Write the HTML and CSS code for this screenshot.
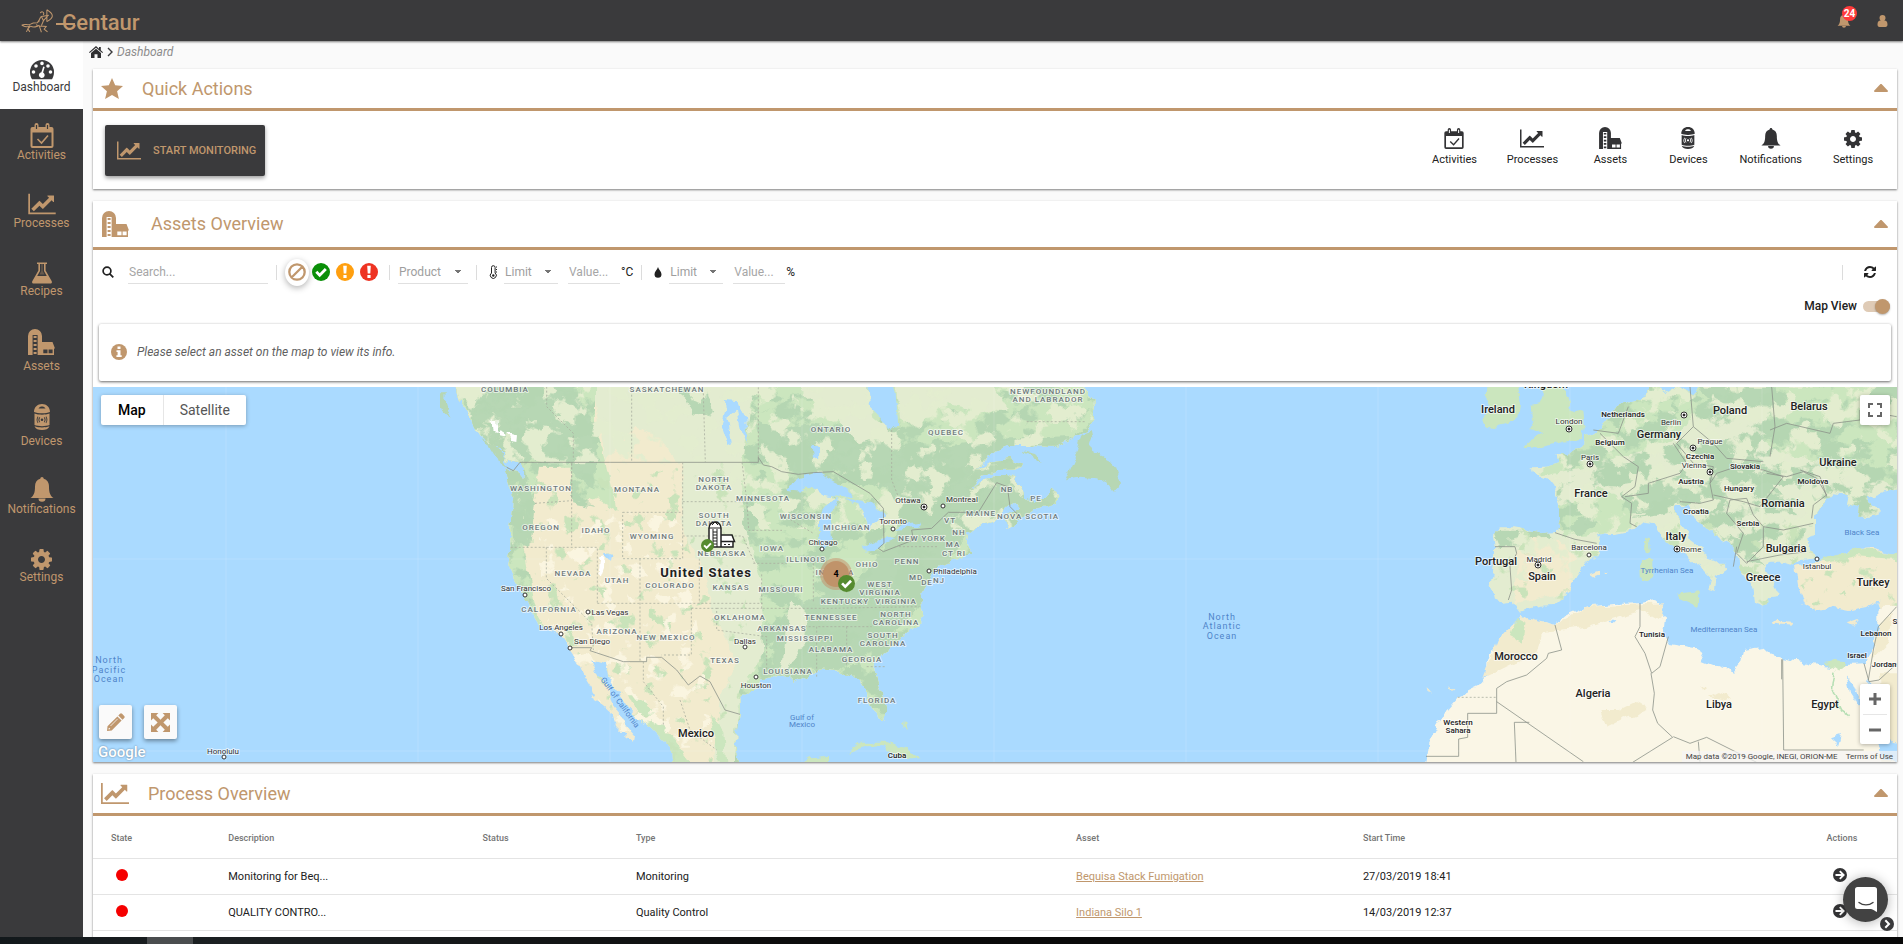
FILE: index.html
```
<!DOCTYPE html>
<html lang="en">
<head>
    <meta charset="UTF-8">
    <meta name="viewport" content="width=device-width, initial-scale=1.0">
    <title>Centaur - Dashboard</title>
    <link rel="stylesheet" href="styles.css">
</head>
<body>
    <!-- Icon set -->
    <svg class="sprite" aria-hidden="true">
        <symbol id="i-dashboard" viewBox="0 0 24 20">
            <path fill="currentColor" fill-rule="evenodd" d="M12 0a12 12 0 0 1 12 12c0 3-.8 5.500-2 7.300H2C.8 17.500 0 15 0 12A12 12 0 0 1 12 0zM3.500 10.200a1.800 1.800 0 1 0 0 3.600 1.800 1.800 0 0 0 0-3.600zM6 4.200a1.800 1.800 0 1 0 0 3.600 1.800 1.800 0 0 0 0-3.600zM12 1.600a1.800 1.800 0 1 0 0 3.600 1.800 1.800 0 0 0 0-3.600zM18 4.200a1.800 1.800 0 1 0 0 3.600 1.800 1.800 0 0 0 0-3.600zM20.500 10.200a1.800 1.800 0 1 0 0 3.600 1.800 1.800 0 0 0 0-3.600zM13.200 6.500l-1.800 5.700a2.900 2.900 0 1 0 1.700.3l1.600-5.600z"/>
        </symbol>
        <symbol id="i-calendar" viewBox="0 0 23 25">
            <path fill="currentColor" fill-rule="evenodd" d="M2 4h2V2a2 2 0 0 1 4 0v2h7V2a2 2 0 0 1 4 0v2h2a2 2 0 0 1 2 2v17a2 2 0 0 1-2 2H2a2 2 0 0 1-2-2V6a2 2 0 0 1 2-2zM2 9.500V23h19V9.500zM5.400 2v4h1.200V2zM16.400 2v4h1.200V2z"/>
            <path fill="none" stroke="currentColor" stroke-width="1.600" d="M7 16l4 4 6.500-7.500"/>
        </symbol>
        <symbol id="i-chart" viewBox="0 0 2048 1792">
            <path fill="currentColor" d="M2048 1536v128h-2048v-1536h128v1408h1920zm-128-1248v435q0 21-19.500 29.500t-35.500-7.500l-121-121-633 633q-10 10-23 10t-23-10l-233-233-416 416-192-192 585-585q10-10 23-10t23 10l233 233 464-464-121-121q-16-16-7.500-35.500t29.500-19.500h435q14 0 23 9t9 23z"/>
        </symbol>
        <symbol id="i-flask" viewBox="0 0 20 21">
            <path fill="currentColor" fill-rule="evenodd" d="M5 0h10v1.600h-1.400V8l6 10.600c.8 1.400 0 2.400-1.300 2.400H1.700C.4 21-.4 20 .4 18.600L6.400 8V1.600H5zM8 1.600v6.800L5.200 13.500h9.600L12 8.400V1.600z"/>
            <path fill="currentColor" d="M9.300 1.600h1.400v7L12.500 12h-5l1.800-3.400z" opacity=".35"/>
        </symbol>
        <symbol id="i-silo" viewBox="0 0 27 26">
            <path fill="currentColor" fill-rule="evenodd" d="M0 26V7a7 7 0 0 1 14 0v6h10.500l2.500 6.500h-1V26zM4.600 6v20h5V6zM15.300 20.600v3.600h4.200v-3.600zM20.600 20.600v3.600h4v-3.600z"/>
            <path fill="currentColor" d="M5.600 7h3v2h-3zM5.600 11h3v2h-3zM5.600 15h3v2h-3zM5.600 19h3v2h-3zM5.600 23h3v2h-3z"/>
        </symbol>
        <symbol id="i-device" viewBox="0 0 16 26">
            <path fill="currentColor" fill-rule="evenodd" d="M0 8C0 3 3.500 0 8 0s8 3 8 8c-4 1.800-12 1.800-16 0zM4.500 4.600h7C10.500 3 9.500 2.600 8 2.600s-2.500.4-3.500 2z"/>
            <path fill="currentColor" fill-rule="evenodd" d="M.5 9.500c4 1.600 11 1.600 15 0V21c-4 1.500-11 1.500-15 0zM8 14.500a1.300 1.300 0 1 0 0 2.600 1.300 1.300 0 0 0 0-2.600zM5.600 13c-1.600 1.500-1.600 4 0 5.600l.6-.7c-1.100-1.200-1.100-3 0-4.200zM10.400 13l-.6.700c1.100 1.200 1.100 3 0 4.200l.6.700c1.600-1.600 1.600-4.100 0-5.600zM3.800 12.300c-1.600 2-1.600 5 0 7l.6-.6c-1.200-1.700-1.200-4.100 0-5.800zM12.200 12.300l-.6.600c1.200 1.700 1.200 4.100 0 5.800l.6.600c1.600-2 1.600-5 0-7z"/>
            <path fill="currentColor" d="M.5 22.200c4 1.600 11 1.600 15 0C14.500 25 11.500 26 8 26S1.500 25 .5 22.200z"/>
        </symbol>
        <symbol id="i-bell" viewBox="0 0 24 25">
            <path fill="currentColor" d="M12 0c1 0 1.600.7 1.700 1.800C17.300 2.800 19 5.800 19 9.500c0 6.500 1.300 9.300 4.500 11.500H.5C3.700 18.800 5 16 5 9.500c0-3.700 1.700-6.700 5.300-7.700C10.400.7 11 0 12 0zM8.500 21.500h7a3.500 3.200 0 0 1-7 0z"/>
        </symbol>
        <symbol id="i-gear" viewBox="128 128 1536 1536">
            <path fill="currentColor" d="M1152 896q0-106-75-181t-181-75-181 75-75 181 75 181 181 75 181-75 75-181zm512-109v222q0 12-8 23t-20 13l-185 28q-19 54-39 91 35 50 107 138 10 12 10 25t-9 23q-27 37-99 108t-94 71q-12 0-26-9l-138-108q-44 23-91 38-16 136-29 186-7 28-36 28h-222q-14 0-24.500-8.500t-11.500-21.500l-28-184q-49-16-90-37l-141 107q-10 9-25 9-14 0-25-11-126-114-165-168-7-10-7-23 0-12 8-23 15-21 51-66.500t54-70.500q-27-50-41-99l-183-27q-13-2-21-12.500t-8-23.500v-222q0-12 8-23t19-13l186-28q14-46 39-92-40-57-107-138-10-12-10-24 0-10 9-23 26-36 98.500-107.500t94.500-71.500q13 0 26 10l138 107q44-23 91-38 16-136 29-186 7-28 36-28h222q14 0 24.500 8.500t11.500 21.500l28 184q49 16 90 37l142-107q9-9 24-9 13 0 25 10 129 119 165 170 7 8 7 22 0 12-8 23-15 21-51 66.500t-54 70.500q26 50 41 98l183 28q13 2 21 12.500t8 23.500z"/>
        </symbol>
        <symbol id="i-star" viewBox="0 0 22 21">
            <path fill="currentColor" d="M11 0l3.200 7.200 7.800.8-5.900 5.200L17.900 21 11 17l-6.900 4 1.800-7.800L0 8l7.800-.8z"/>
        </symbol>
        <symbol id="i-caret" viewBox="0 0 14 8">
            <path fill="currentColor" d="M7 0c.4 0 .8.200 1 .4l5.700 6c.6.700.2 1.600-.7 1.600H1C.1 8-.3 7.100.3 6.400L6 .4c.2-.2.6-.4 1-.4z"/>
        </symbol>
        <symbol id="i-home" viewBox="0 0 14 12">
            <path fill="currentColor" d="M7 0l3 2.700V1h1.800v3.300L14 6.300l-.7.800L7 1.700.7 7.100 0 6.300zM7 2.800l5 4.300V12H8.500V8.300h-3V12H2V7.100z"/>
        </symbol>
        <symbol id="i-user" viewBox="0 0 10 12">
            <path fill="currentColor" d="M5 0a3 3 0 0 1 3 3c0 1.100-.5 2-1.200 2.600 2.200 0 3.200 1.400 3.200 4.200C10 11 9.300 12 8 12H2c-1.300 0-2-1-2-2.200 0-2.800 1-4.200 3.200-4.200A3.200 3.200 0 0 1 2 3a3 3 0 0 1 3-3z"/>
        </symbol>
        <symbol id="i-search" viewBox="0 0 12 12">
            <path fill="none" stroke="currentColor" stroke-width="1.700" d="M8.900 5a3.900 3.900 0 1 1-7.800 0 3.900 3.900 0 0 1 7.800 0zM7.800 7.800L11.300 11.400"/>
        </symbol>
        <symbol id="i-check" viewBox="0 0 18 18">
            <circle cx="9" cy="9" r="9" fill="currentColor"/>
            <path fill="none" stroke="#fff" stroke-width="2.800" d="M4.300 8.800l3.400 3.500 6.100-6.200"/>
        </symbol>
        <symbol id="i-alert" viewBox="0 0 18 18">
            <circle cx="9" cy="9" r="9" fill="currentColor"/>
            <path fill="#fff" d="M7.200 2.800h3.600l-.5 7.700H7.700zM7.400 12h3.200v3H7.400z"/>
        </symbol>
        <symbol id="i-ban" viewBox="0 0 18 18">
            <path fill="none" stroke="currentColor" stroke-width="2.300" d="M16.700 9A7.700 7.700 0 1 1 1.300 9a7.700 7.700 0 0 1 15.400 0zM3.800 14.300L14.300 3.800"/>
        </symbol>
        <symbol id="i-thermo" viewBox="0 0 10 14">
            <path fill="none" stroke="currentColor" d="M2.500 8V2.500a1.800 1.800 0 0 1 3.600 0V8a3 3 0 1 1-3.600 0z"/>
            <path stroke="currentColor" d="M7 2h1M7 4.500h1M7 7h1"/>
            <circle cx="4.300" cy="10.500" r="1.200" fill="currentColor"/>
        </symbol>
        <symbol id="i-drop" viewBox="0 0 10 14">
            <path fill="currentColor" d="M4 2c.5 2.500 3.500 4.500 3.500 7.200a3.500 3.500 0 0 1-7 0C.5 6.500 3.500 4.500 4 2z"/>
        </symbol>
        <symbol id="i-refresh" viewBox="128 128 1536 1536">
            <path fill="currentColor" d="M1639 1056q0 5-1 7-64 268-268 434.500t-478 166.500q-146 0-282.500-55t-243.500-157l-129 129q-19 19-45 19t-45-19-19-45v-448q0-26 19-45t45-19h448q26 0 45 19t19 45-19 45l-137 137q71 66 161 102t187 36q134 0 250-65t186-179q11-17 53-117 8-23 30-23h192q13 0 22.500 9.500t9.500 22.500zm25-800v448q0 26-19 45t-45 19h-448q-26 0-45-19t-19-45 19-45l138-138q-148-137-349-137-134 0-250 65t-186 179q-11 17-53 117-8 23-30 23h-199q-13 0-22.500-9.500t-9.500-22.500v-7q65-268 270-434.500t480-166.500q146 0 284 55.500t245 156.500l130-129q19-19 45-19t45 19 19 45z"/>
        </symbol>
        <symbol id="i-info" viewBox="0 0 16 16">
            <circle cx="8" cy="8" r="8" fill="currentColor"/>
            <path fill="#fff" d="M6.500 2.500h3v2.500h-3zM5.500 6.300h4v5h1.200V13H5.400v-1.700h1.200V8H5.500z"/>
        </symbol>
        <symbol id="i-pencil" viewBox="0 0 18 18">
            <path fill="currentColor" fill-rule="evenodd" d="M13 .8a1.500 1.500 0 0 1 2.100 0l2.100 2.100a1.500 1.500 0 0 1 0 2.100L15.500 6.700l-4.200-4.200zM10.400 3.400l4.200 4.200L4.700 17.500 0 18l.5-4.700zM1.700 15.200l-.2 1.300 1.300-.2.400-.5-1-1z"/>
            <path fill="none" stroke="#fafafa" stroke-width=".8" d="M3.500 13l7.200-7.200"/>
        </symbol>
        <symbol id="i-expand" viewBox="0 0 18 18">
            <path fill="currentColor" d="M0 0h7L4.900 2.100 9 6.300l4.100-4.200L11 0h7v7l-2.100-2.100L11.700 9l4.200 4.100L18 11v7h-7l2.100-2.100L9 11.700l-4.100 4.200L7 18H0v-7l2.100 2.100L6.300 9 2.100 4.900 0 7z"/>
        </symbol>
        <symbol id="i-go" viewBox="0 0 14 14">
            <circle cx="7" cy="7" r="7" fill="currentColor"/>
            <path fill="none" stroke="#fff" stroke-width="1.900" d="M2.500 7h8M6.800 3.200L10.600 7l-3.800 3.800"/>
        </symbol>
    </svg>

    <header class="topbar">
        <a class="logo" href="#" aria-label="Centaur">
            <svg class="logo-mark" viewBox="0 0 94 70" width="32" height="24" aria-hidden="true">
                <path d="M2 47c10-5 18 2 26-3 6-4 12-4 20-4l9-14M2 47c8 4 14 8 22 3l-8 17M28 50l-8 8 6 9M28 50c8 5 20 2 26-3M44 46l10 4 20 1-6 8 10 8M54 50l6 18M52 38c2-8 4-14 8-16l6 12-6 14M60 22l22-4M57 12a5 5 0 1 1 8 5M76 2c10 6 16 14 16 18s-8 12-16 17M76 2v35M66 34l14-16"/>
            </svg>
            <span class="logo-text">Centaur</span>
        </a>
        <div class="topbar-actions">
            <button class="topbar-btn" aria-label="Notifications">
                <svg width="14" height="14"><use href="#i-bell"/></svg>
                <span class="badge">24</span>
            </button>
            <button class="topbar-btn" aria-label="Account"><svg width="11" height="12"><use href="#i-user"/></svg></button>
        </div>
    </header>

    <div class="container">
        <nav class="sidebar">
            <a class="active" href="#"><svg width="24" height="20"><use href="#i-dashboard"/></svg>Dashboard</a>
            <a href="#"><svg width="24" height="25"><use href="#i-calendar"/></svg>Activities</a>
            <a href="#"><svg width="28" height="24"><use href="#i-chart"/></svg>Processes</a>
            <a href="#"><svg width="20" height="22"><use href="#i-flask"/></svg>Recipes</a>
            <a class="tall" href="#"><svg width="27" height="26"><use href="#i-silo"/></svg>Assets</a>
            <a class="tall" href="#"><svg width="16" height="26"><use href="#i-device"/></svg>Devices</a>
            <a href="#"><svg width="24" height="25"><use href="#i-bell"/></svg>Notifications</a>
            <a href="#"><svg width="21" height="21"><use href="#i-gear"/></svg>Settings</a>
        </nav>

        <main class="content">
            <div class="breadcrumb">
                <a href="#" aria-label="Home"><svg width="14" height="12"><use href="#i-home"/></svg></a>
                <svg class="crumb-sep" width="6" height="10" viewBox="0 0 6 10"><path d="M1 1l4 4-4 4"/></svg>
                <em>Dashboard</em>
            </div>

            <section class="card">
                <div class="card-header">
                    <svg width="22" height="21"><use href="#i-star"/></svg>
                    <h2>Quick Actions</h2>
                    <button class="collapse" aria-label="Collapse"><svg width="14" height="8"><use href="#i-caret"/></svg></button>
                </div>
                <div class="quick-actions">
                    <button class="start-btn"><svg width="24" height="21"><use href="#i-chart"/></svg>START MONITORING</button>
                    <div class="quick-links">
                        <a href="#"><svg width="20" height="21"><use href="#i-calendar"/></svg>Activities</a>
                        <a href="#"><svg width="24" height="21"><use href="#i-chart"/></svg>Processes</a>
                        <a href="#"><svg width="23" height="22"><use href="#i-silo"/></svg>Assets</a>
                        <a href="#"><svg width="14" height="22"><use href="#i-device"/></svg>Devices</a>
                        <a href="#"><svg width="20" height="21"><use href="#i-bell"/></svg>Notifications</a>
                        <a href="#"><svg width="18" height="20"><use href="#i-gear"/></svg>Settings</a>
                    </div>
                </div>
            </section>

            <section class="card">
                <div class="card-header tall">
                    <svg width="27" height="26"><use href="#i-silo"/></svg>
                    <h2>Assets Overview</h2>
                    <button class="collapse" aria-label="Collapse"><svg width="14" height="8"><use href="#i-caret"/></svg></button>
                </div>

                <div class="filters">
                    <label for="search" aria-label="Search"><svg width="12" height="12"><use href="#i-search"/></svg></label>
                    <input class="search" id="search" type="text" placeholder="Search...">
                    <span class="sep"></span>
                    <div class="states">
                        <button class="state none selected" aria-label="All"><svg width="18" height="18"><use href="#i-ban"/></svg></button>
                        <button class="state ok" aria-label="Ok"><svg width="18" height="18"><use href="#i-check"/></svg></button>
                        <button class="state warn" aria-label="Warning"><svg width="18" height="18"><use href="#i-alert"/></svg></button>
                        <button class="state crit" aria-label="Critical"><svg width="18" height="18"><use href="#i-alert"/></svg></button>
                    </div>
                    <span class="sep"></span>
                    <select class="product" aria-label="Product"><option>Product</option></select>
                    <span class="sep"></span>
                    <div class="limit">
                        <svg width="10" height="14"><use href="#i-thermo"/></svg>
                        <select aria-label="Temperature limit"><option>Limit</option></select>
                        <label><input type="text" placeholder="Value..." aria-label="Temperature value"> °C</label>
                    </div>
                    <span class="sep"></span>
                    <div class="limit">
                        <svg width="10" height="14"><use href="#i-drop"/></svg>
                        <select aria-label="Humidity limit"><option>Limit</option></select>
                        <label><input type="text" placeholder="Value..." aria-label="Humidity value"> %</label>
                    </div>
                    <span class="sep last"></span>
                    <button class="refresh" aria-label="Refresh"><svg width="12" height="12"><use href="#i-refresh"/></svg></button>
                </div>
                <div class="map-view">
                    <label for="map-view">Map View</label>
                    <input class="toggle" id="map-view" type="checkbox" checked>
                </div>

                <div class="info">
                    <svg width="16" height="16"><use href="#i-info"/></svg>
                    <em>Please select an asset on the map to view its info.</em>
                </div>

                <div class="map">
                    <svg class="map-canvas" viewBox="0 0 1804 375" preserveAspectRatio="xMidYMid slice">
                        <defs>
                            <filter id="coast" filterUnits="userSpaceOnUse" x="-120" y="-20" width="2100" height="1200">
                                <feTurbulence type="fractalNoise" baseFrequency="0.03" numOctaves="3" seed="4"/>
                                <feDisplacementMap in="SourceGraphic" scale="26" xChannelSelector="R" yChannelSelector="G"/>
                            </filter>
                            <filter id="forest" x="0" y="0" width="1" height="1" color-interpolation-filters="sRGB">
                                <feTurbulence type="fractalNoise" baseFrequency="0.012 0.016" numOctaves="4" seed="8"/>
                                <feColorMatrix values="0 0 0 0 .71  0 0 0 0 .84  0 0 0 0 .70  14 0 0 0 -6.800"/>
                                <feComposite in2="SourceGraphic" operator="in"/>
                            </filter>
                            <filter id="meadow" x="0" y="0" width="1" height="1" color-interpolation-filters="sRGB">
                                <feTurbulence type="fractalNoise" baseFrequency="0.015" numOctaves="4" seed="21"/>
                                <feColorMatrix values="0 0 0 0 .89  0 0 0 0 .93  0 0 0 0 .81  14 0 0 0 -7.600"/>
                                <feComposite in2="SourceGraphic" operator="in"/>
                            </filter>
                            <filter id="scrub" x="0" y="0" width="1" height="1" color-interpolation-filters="sRGB">
                                <feTurbulence type="fractalNoise" baseFrequency="0.020" numOctaves="3" seed="30"/>
                                <feColorMatrix values="0 0 0 0 .79  0 0 0 0 .89  0 0 0 0 .73  14 0 0 0 -8.900"/>
                                <feComposite in2="SourceGraphic" operator="in"/>
                            </filter>
                            <filter id="dry" x="0" y="0" width="1" height="1" color-interpolation-filters="sRGB">
                                <feTurbulence type="fractalNoise" baseFrequency="0.022" numOctaves="3" seed="12"/>
                                <feColorMatrix values="0 0 0 0 .98  0 0 0 0 .96  0 0 0 0 .88  14 0 0 0 -8.400"/>
                                <feComposite in2="SourceGraphic" operator="in"/>
                            </filter>
                            <path id="na" d="M-75 10L-65 60-35 100 0 165 30 190 60 205 75 235 115 250 130 265 128 300 110 275 80 262 85 290 100 350 95 400 90 460 92 500 85 555 100 590 130 640 150 690 175 730 235 760 265 800 285 830 310 880 335 920 345 950 330 955 365 975 395 1000 405 1035 440 1070 462 1085 465 1068 440 1040 425 1010 400 980 385 930 370 895 345 870 330 838 375 850 385 890 410 930 440 980 470 1015 510 1040 540 1070 570 1100 575 1160H778L768 1120 768 1080 772 1040 780 1000 778 960 800 940 830 920 838 895 870 890 900 893 930 890 945 905 975 890 990 878 1025 865 1065 870 1085 888 1115 880 1140 900 1155 925 1162 960 1175 995 1205 1022 1218 1010 1218 975 1200 930 1185 880 1188 850 1210 815 1250 790 1275 760 1310 740 1330 710 1325 675 1320 640 1340 610 1355 580 1370 560 1400 545 1445 535 1460 520 1475 515 1460 490 1465 460 1490 440 1540 425 1560 405 1580 385 1610 365 1620 380 1580 410 1580 445 1600 445 1620 420 1660 390 1725 372 1735 345 1720 325 1690 360 1650 372 1632 355 1625 330 1610 300 1580 285 1540 285 1510 305 1475 325 1500 290 1550 270 1620 268 1625 250 1590 238 1530 245 1490 270 1460 305 1500 255 1550 210 1580 198 1660 198 1730 200 1770 175 1820 150 1842 115 1840 60 1800 10z"/>
                            <path id="eu" d="M745 10L740 50 700 65 655 72 640 95 615 130 580 160 552 172 550 195 520 215 505 225 470 222 475 250 440 260 395 262 400 285 440 295 460 320 470 345 480 370 480 410 472 455 420 460 340 445 300 445 278 465 285 500 285 545 272 610 285 662 310 668 335 665 360 698 380 690 420 680 460 678 500 645 510 610 530 580 565 545 600 525 588 490 600 460 650 462 700 450 730 425 765 430 785 470 820 500 850 520 880 545 910 565 935 590 925 630 945 635 950 590 980 570 960 550 925 535 905 500 870 475 855 440 830 405 830 375 860 375 875 400 910 440 950 470 1000 500 1010 530 1020 570 1040 600 1060 620 1065 670 1095 680 1110 655 1140 650 1120 610 1100 580 1090 555 1110 545 1150 545 1180 555 1200 540 1250 535 1230 510 1225 480 1245 455 1245 410 1280 360 1300 340 1350 345 1345 375 1380 385 1375 410 1410 410 1440 400 1425 375 1400 355 1450 335 1510 320V10H910L880 40 820 20 790 40 770 10z"/>
                            <path id="tr" d="M1185 560L1250 548 1300 530 1350 510 1410 505 1510 530V690L1440 680 1435 665 1400 680 1350 690 1300 680 1250 695 1210 670 1195 620z"/>
                            <path id="af" d="M1510 675H1450L1435 690 1435 740 1420 800 1395 850 1340 852 1290 860 1200 845 1150 835 1105 820 1085 800 1030 810 1020 850 1000 875 960 860 910 840 890 805 810 792 790 760 795 715 775 700 790 680 765 660 720 670 640 672 560 680 500 705 465 735 430 725 380 720 365 705 350 740 320 775 275 810 262 850 262 890 235 920 175 950 140 990 110 1040 85 1090 75 1160H1510z"/>
                            <clipPath id="na-clip"><use href="#na"/></clipPath>
                            <clipPath id="eu-clip"><use href="#eu"/></clipPath>
                            <g id="capital">
                                <circle r="3" fill="#fff" stroke="#333"/>
                                <circle r="1" stroke="#222"/>
                            </g>
                        </defs>

                        <rect width="1804" height="375" fill="#aadaff"/>

                        <!-- North America -->
                        <g transform="translate(387 -7) scale(.333333)" filter="url(#coast)">
                            <use href="#na" fill="#f2ebce"/>
                            <g clip-path="url(#na-clip)">
                                <path fill="#e3ecd0" d="M335 10H1900V1160H700L720 940 770 850 700 700 660 540 608 460 608 247 380 247z"/>
                                <path fill="#f2ebce" d="M370 250L430 180 470 140 530 170 600 247z"/>
                                <path fill="#cbe6be" d="M820 10H1900V1160H760L780 940 850 820 840 600 790 420 785 250z"/>
                                <path fill="#cbe6be" d="M-100 0H345V130L380 250 410 390 340 350 280 370 270 260 180 260 160 370 130 500 170 700 200 750 100 700 60 500z"/>
                                <path fill="#b7d7b4" d="M1040 260L1180 180 1330 210 1540 180 1800 170 1700 420 1480 440 1400 560 1300 700 1200 800 1080 870 880 860 880 740 1000 650 1130 610 1200 520 1280 420 1220 330z"/>
                                <path fill="#b7d7b4" d="M900 150L1000 130 1130 160 1260 200 1400 210 1500 260 1360 380 1230 330 1120 260 980 280 850 250 830 120z"/>
                                <path fill="#b7d7b4" d="M-90 0H260L330 110 350 200 340 330 280 280 275 250 180 230 130 260 165 370 150 500 100 490 90 300 0 160z"/>
                                <path fill="#b7d7b4" d="M560 10L680 30 700 110 640 100 620 60z"/>
                                <path fill="#cbe6be" d="M440 930L500 970 570 1060 640 1160H570L480 1020zM690 1000L730 1060 740 1160H720z"/>
                                <path filter="url(#forest)" fill="#000" d="M820 10H1900V1160H760L780 940 850 820 840 600 790 420 785 250z"/>
                                <path fill="#e3ecd0" d="M940 10H1160L1180 110 1240 160 1140 190 1060 110zM1250 10H1540L1580 80 1520 100 1400 70 1310 140 1260 110z"/>
                                <path fill="#e3ecd0" d="M930 660L980 690 970 800 930 850 900 890 920 780z"/>
                                <path filter="url(#forest)" fill="#000" d="M-100 0H345V130L380 250 370 390 280 370 270 260 180 260 160 370 130 500 170 700 100 700 60 500z"/>
                                <path filter="url(#meadow)" fill="#000" d="M-100 0H1900V450H850L700 250H180L100 500z"/>
                                <path filter="url(#scrub)" fill="#000" d="M80 250H800V1150H300z"/>
                                <path filter="url(#dry)" fill="#000" d="M180 400H600L700 1100H300L180 650z"/>
                            </g>
                            <path fill="#fff" d="M35 120l14-4 4 40-16-4zM60 148l16 2 4 20-20-4zM85 160l26 6-2 20-18-4zM358 530l16-4-2 40-10 28-10-10z"/>
                            <path fill="#aadaff" d="M735 60l40 4 24 56 4 70-20-40-12-60-26 20 14 80-14 6-20-60 12-50zM375 515l22 10-4 20-14-8zM1165 10l5 70 30 30 10 25 25 15 20-20-5-50-5-70z"/>
                            <path fill="#aadaff" d="M915 330l45-35 50-20 40 25 50 25 25 30-30-5-70-10-30-25-30 20zM1020 400l20-25 35-25-15 40-10 50 5 50-25 20-10-40zM1090 355l45 5 45 10 40 40-40 20-12 25-13-35-20-50zM1145 500l55-20 45-10-15 20-70 28zM1245 450l25-18 50-7-10 18zM995 195l18 0 2 35-16 4z"/>
                            <path fill="#b7d7b4" d="M1755 298l30-68 20-65 30-15 5 25-10 30 30 20 30 15 15 20 15 50-20 25-15-25-35-15-50-5zM1625 212l40 10 20 20-30-8zM5 175l45 25 40 60-50-30zM-135 40l35 0-2 30 16 50-30-30zM1640 350l30 20-20 4z"/>
                            <path fill="#cbe6be" d="M1105 1115l40-30 70 0 60 20 50 30h-60l-60-40-60 5zM950 1160l40-25 60-5v30zM1265 1035l10-8 6 20zM860 1160l30-20z"/>
                        </g>
                        <g class="border" transform="translate(387 -7) scale(.333333)">
                            <path d="M80 262l20 10 20-25H835V232l15 23 25 5 30 15 50 8 45-5 60-3 110 65 40 45 2 105-17 15 15 10 90-35-5-30 60-5 50-48h90l55-89 32 12 8 60 25 25M272 803h63l-5 9 100 33h70v-13h45l45 38 35 45 35-27 30 17 45 85 45 13"/>
                            <path class="state-line" d="M455 20V247M200 20v60l80 80v80M670 40l6 207M835 10v222M1235 150v150l20 50M1640 125h180M165 370l110-8V247v255M92 502H352V670M199 502v93l136 135 5 80M428 397H608V536H428zM352 670H848M480 536v309M608 247v150M608 365h185M608 468h180l35 80M658 536V670M786 247l15 120 5 84h100M820 550h100M845 685V580M634 685V825H545M634 685h76v65l150 20v100M710 685h135M848 685h200l270-5M950 740h60v150M1015 740h160M1100 740v120M1160 860h60M900 400l100 60M1000 550v120M1100 560v80M1245 500h130M490 845v60l60 75v60M600 960l30 90 80 60"/>
                        </g>

                        <!-- Europe and Africa -->
                        <g transform="translate(1307 -7) scale(.333333)" filter="url(#coast)">
                            <use href="#eu" fill="#e3ecd0"/>
                            <g clip-path="url(#eu-clip)">
                                <path fill="#cbe6be" d="M560 160L740 20H1000L880 100 830 180 700 220 560 260 400 290zM1120 20H1510V330L1350 260 1130 220 1090 180zM480 380l120-60 100 60-10 70-200 20z"/>
                                <path fill="#b7d7b4" d="M660 340L720 300 860 290 930 330 900 370 740 400 690 400zM1040 270L1110 300 1190 400 1090 400 1060 320zM1110 120l170 30 10 60-140-50zM880 20h230v60l-140-10zM880 370l60 80 90 30 60 80-60-30-100-90zM280 455l160 0 30 30-170 20zM820 200l60 40 100-20 110 20-20 20-180 0zM500 440l60-40 40 30-70 40z"/>
                                <path fill="#f2ebce" d="M360 470L480 480 540 550 500 640 340 670 350 560z"/>
                                <path filter="url(#forest)" fill="#000" d="M480 10H1510V400L1250 480 1100 540 800 400 470 450z"/>
                                <path filter="url(#meadow)" fill="#000" d="M380 10H1510V600H250z"/>
                                <path filter="url(#scrub)" fill="#000" d="M250 430H1300V700H250z"/>
                            </g>
                            <path fill="#cbe6be" d="M430 10l-10 60-25 5 5 55-15 10 45 20-30 15-30 30 60-5 50-15 60-5 15-40-5-45-40-10-20-75zM262 10l-2 50 10 30-20 30 10 25 50-15 45-15 5-45-10-60z"/>
                            <path fill="#cbe6be" d="M738 475l12-8 2 40-14 14-6-24zM725 540l32 0 0 50-28 14zM832 640l68-6-8 44-56-26z"/>
                            <path fill="#f2ebce" d="M575 582l25-10 0 12-14 6zM610 575l10 2-6 4zM1115 718l60 8 4 8-60-6zM1340 730l40-14-20 24zM80 925l15 15-12 2zM150 915l16 14-8 4z"/>
                            <use href="#tr" fill="#f2ebce"/>
                            <use href="#tr" filter="url(#scrub)"/>
                            <path fill="#cbe6be" d="M1250 540l120-35 140 20v14l-140-10-90 16z"/>
                            <use href="#af" fill="#faf6e6"/>
                            <path fill="#f2ebce" d="M365 705l65 20 35 10 95-55 230-10-10 50-50-30-170 50-130 15-20 60-160 80 40-110zM600 990l60 0 60-30 20 30-80 30-40 20zM900 920l18 0-8 14zM930 950l30-14 30 16-20 10zM1435 740l40-40-10 90-50 50zM1440 880h70v270h-60z"/>
                            <path fill="#cbe6be" d="M1275 850l30-10 35 4-20 35zM350 710l30 15-10 60-40-20z"/>
                            <path fill="#aadaff" d="M1340 885l15 20 20 50 100 130 40 10v70l-60-30-60-130-45-70zM1402 900l6 4-6 40zM740 760l20 0-6 10zM632 720l14 4-8 8zM1290 1075l30-10-8 30z"/>
                            <path fill="none" stroke="#b7dfb5" stroke-width="5" d="M1305 875l-8 60 25 55 30 20"/>
                        </g>
                        <g class="border" transform="translate(1307 -7) scale(.333333)">
                            <path d="M285 500h60l5 20-20 40 5 70-10 30M465 458l60 20 65 12M580 150l75 10 30-80M600 160l70 70 45 30-10 60-40 30 30 20-5 60 20 10M870 20l10 120-50 50 50 60M880 140l60 50 40 45 110 10M820 190l40 60-20 30-95 30 0 30-70 10M880 250l60 10-10 50 10 50-40 10-60-5M930 310l20-30 60-20 80 10 60 20-70 90-50-15-90-20M1115 20l10 120-15 90M1110 150l50-20 130 30 10-30 80-10V90l110 20M1100 280l60 10 50-15 40 20 30 50-40 30-5 40M1090 440l60 10 90-20M990 360l50-5 20 50 30 35v60l-50 50-30-30 20-60-50-60zM1040 545l100-20 80-10M1010 500l-10 60M1200 270l60 20 20 60"/>
                            <path d="M465 735l20 75-40 10-5 15-60 50-60 20-30 20V1000H203v72l-27 5v52H78M290 965l260 180M343 1027h45M343 1027l5 120M720 670v70l-15 30 30 50 20 60 25-20 25-90M753 880l10 60-5 50 15 40 45 42-120 75M820 1070l50 20 50-18 150 75M895 1085l5 60M1148 838l3 272h240M1145 838v60M1392 850l15 55 30-5 55-50M1405 900l15-90 15-70 55-60"/>
                            <path class="state-line" d="M173 952H290"/>
                        </g>

                        <path class="graticule" d="M133 0V375M325 0V375M517 0V375M709 0V375M901 0V375M1093 0V375M1285 0V375M1477 0V375M1669 0V375M0 172H1804M0 364H1804"/>

                        <!-- States and provinces -->
                        <g class="lbl region">
                            <text x="412" y="5">COLUMBIA</text><text x="574" y="5">SASKATCHEWAN</text>
                            <text x="448" y="104">WASHINGTON</text><text x="544" y="105">MONTANA</text>
                            <text x="621" y="95">NORTH</text><text x="621" y="103">DAKOTA</text>
                            <text x="670" y="114">MINNESOTA</text><text x="448" y="143">OREGON</text>
                            <text x="503" y="146">IDAHO</text><text x="559" y="152">WYOMING</text>
                            <text x="621" y="131">SOUTH</text><text x="621" y="139">DAKOTA</text>
                            <text x="679" y="164">IOWA</text><text x="629" y="169">NEBRASKA</text>
                            <text x="713" y="175">ILLINOIS</text><text x="480" y="189">NEVADA</text>
                            <text x="524" y="196">UTAH</text><text x="577" y="201">COLORADO</text>
                            <text x="638" y="203">KANSAS</text><text x="688" y="205">MISSOURI</text>
                            <text x="456" y="225">CALIFORNIA</text><text x="524" y="247">ARIZONA</text>
                            <text x="573" y="253">NEW MEXICO</text><text x="647" y="233">OKLAHOMA</text>
                            <text x="689" y="244">ARKANSAS</text><text x="712" y="254">MISSISSIPPI</text>
                            <text x="632" y="276">TEXAS</text><text x="695" y="287">LOUISIANA</text>
                            <text x="738" y="265">ALABAMA</text><text x="769" y="275">GEORGIA</text>
                            <text x="738" y="233">TENNESSEE</text><text x="752" y="217">KENTUCKY</text>
                            <text x="803" y="217">VIRGINIA</text><text x="787" y="200">WEST</text><text x="787" y="208">VIRGINIA</text>
                            <text x="803" y="230">NORTH</text><text x="803" y="238">CAROLINA</text>
                            <text x="790" y="251">SOUTH</text><text x="790" y="259">CAROLINA</text>
                            <text x="784" y="316">FLORIDA</text><text x="774" y="180">OHIO</text>
                            <text x="742" y="188">INDIANA</text><text x="814" y="177">PENN</text>
                            <text x="823" y="193">MD</text><text x="834" y="198">DE</text><text x="846" y="196">NJ</text>
                            <text x="829" y="154">NEW YORK</text><text x="861" y="169">CT RI</text>
                            <text x="860" y="160">MA</text><text x="866" y="148">NH</text><text x="857" y="136">VT</text>
                            <text x="888" y="129">MAINE</text><text x="914" y="105">NB</text><text x="943" y="114">PE</text>
                            <text x="935" y="132">NOVA SCOTIA</text><text x="754" y="143">MICHIGAN</text>
                            <text x="713" y="132">WISCONSIN</text><text x="738" y="45">ONTARIO</text>
                            <text x="853" y="48">QUEBEC</text><text x="955" y="7">NEWFOUNDLAND</text><text x="955" y="15">AND LABRADOR</text>
                        </g>

                        <!-- Cities -->
                        <g class="lbl city">
                            <text x="433" y="204">San Francisco</text><text x="517" y="228">Las Vegas</text>
                            <text x="468" y="243">Los Angeles</text><text x="499" y="257">San Diego</text>
                            <text x="652" y="257">Dallas</text><text x="663" y="301">Houston</text>
                            <text x="730" y="158">Chicago</text><text x="800" y="137">Toronto</text>
                            <text x="815" y="116">Ottawa</text><text x="869" y="115">Montreal</text>
                            <text x="862" y="187">Philadelphia</text><text x="130" y="367">Honolulu</text>
                            <text x="1476" y="37">London</text><text x="1578" y="38">Berlin</text>
                            <text x="1617" y="57">Prague</text><text x="1601" y="81">Vienna</text>
                            <text x="1497" y="73">Paris</text><text x="1598" y="165">Rome</text>
                            <text x="1496" y="163">Barcelona</text><text x="1446" y="175">Madrid</text>
                            <text x="1724" y="182">Istanbul</text>
                        </g>
                        <g class="dots">
                            <circle cx="432" cy="208" r="2"/><circle cx="495" cy="225" r="2"/><circle cx="468" cy="247" r="2"/>
                            <circle cx="477" cy="261" r="2"/><circle cx="652" cy="260" r="2"/><circle cx="663" cy="290" r="2"/>
                            <circle cx="729" cy="162" r="2"/><circle cx="800" cy="142" r="2"/><circle cx="850" cy="119" r="2"/>
                            <circle cx="836" cy="184" r="2"/><circle cx="131" cy="370" r="2"/><circle cx="1496" cy="168" r="2"/>
                            <circle cx="1724" cy="172" r="2"/>
                        </g>
                        <use href="#capital" x="831" y="120"/><use href="#capital" x="1476" y="42"/>
                        <use href="#capital" x="1591" y="28"/><use href="#capital" x="1600" y="61"/>
                        <use href="#capital" x="1617" y="85"/><use href="#capital" x="1497" y="77"/>
                        <use href="#capital" x="1584" y="162"/><use href="#capital" x="1445" y="178"/>

                        <!-- Countries -->
                        <g class="lbl country small">
                            <text x="804" y="371">Cuba</text><text x="1530" y="30">Netherlands</text>
                            <text x="1517" y="58">Belgium</text><text x="1607" y="72">Czechia</text>
                            <text x="1652" y="82">Slovakia</text><text x="1720" y="97">Moldova</text>
                            <text x="1598" y="97">Austria</text><text x="1646" y="104">Hungary</text>
                            <text x="1603" y="127">Croatia</text><text x="1655" y="139">Serbia</text>
                            <text x="1559" y="250">Tunisia</text><text x="1783" y="249">Lebanon</text>
                            <text x="1764" y="271">Israel</text><text x="1791" y="280">Jordan</text>
                            <text x="1802" y="237">S</text><text x="1365" y="338">Western</text><text x="1365" y="346">Sahara</text>
                        </g>
                        <g class="lbl country">
                            <text x="603" y="350">Mexico</text><text x="1453" y="1">Kingdom</text>
                            <text x="1405" y="26">Ireland</text><text x="1637" y="27">Poland</text>
                            <text x="1716" y="23">Belarus</text><text x="1566" y="51">Germany</text>
                            <text x="1745" y="79">Ukraine</text><text x="1690" y="120">Romania</text>
                            <text x="1498" y="110">France</text><text x="1583" y="153">Italy</text>
                            <text x="1449" y="193">Spain</text><text x="1403" y="178">Portugal</text>
                            <text x="1693" y="165">Bulgaria</text><text x="1670" y="194">Greece</text>
                            <text x="1780" y="199">Turkey</text><text x="1423" y="273">Morocco</text>
                            <text x="1500" y="310">Algeria</text><text x="1626" y="321">Libya</text>
                            <text x="1732" y="321">Egypt</text>
                        </g>
                        <g class="lbl country large"><text x="613" y="190">United States</text></g>

                        <!-- Water -->
                        <g class="lbl water">
                            <text x="709" y="333">Gulf of</text><text x="709" y="340">Mexico</text>
                            <text x="1769" y="148">Black Sea</text><text x="1574" y="186">Tyrrhenian Sea</text>
                            <text x="1631" y="245">Mediterranean Sea</text>
                            <text transform="translate(525 317) rotate(54)">Gulf of California</text>
                        </g>
                        <g class="lbl water ocean">
                            <text x="16" y="276">North</text><text x="16" y="286">Pacific</text><text x="16" y="295">Ocean</text>
                            <text x="1129" y="233">North</text><text x="1129" y="242">Atlantic</text><text x="1129" y="252">Ocean</text>
                        </g>

                        <!-- Asset markers -->
                        <g transform="translate(615 134)">
                            <path fill="#fff" stroke="#222" stroke-width="1.500" d="M1 26V7a6 6 0 0 1 12 0v19zM13 14h11l2.500 6.500H13zM14 20.500h11V26H13"/>
                            <path fill="none" stroke="#222" d="M1 7h12M5 8v18M9 8v18M5 11h4M5 14h4M5 17h4M5 20h4M5 23h4M4 4l3-3 3 3M16 23.500h2M20 23.500h2"/>
                            <svg x="-7" y="18" width="13" height="13" color="#558b2f"><use href="#i-check"/></svg>
                        </g>
                        <circle cx="743" cy="187" r="16" fill="#c58c65" opacity=".5"/>
                        <circle cx="743" cy="187" r="13" fill="#c0936a"/>
                        <text class="cluster" x="743" y="190">4</text>
                        <svg x="745" y="188" width="17" height="17" color="#558b2f"><use href="#i-check"/></svg>
                    </svg>

                    <div class="map-type">
                        <button class="on">Map</button>
                        <button>Satellite</button>
                    </div>
                    <button class="map-btn fullscreen" aria-label="Toggle fullscreen">
                        <svg width="14" height="14" viewBox="0 0 14 14"><path fill="none" stroke="#666" stroke-width="2" d="M1 5V1h4M9 1h4v4M13 9v4H9M5 13H1V9"/></svg>
                    </button>
                    <div class="zoom">
                        <button aria-label="Zoom in"><svg width="14" height="14" viewBox="0 0 14 14"><path stroke="#666" stroke-width="3" d="M1 7h12M7 1v12"/></svg></button>
                        <button aria-label="Zoom out"><svg width="14" height="14" viewBox="0 0 14 14"><path stroke="#666" stroke-width="3" d="M1 7h12"/></svg></button>
                    </div>
                    <div class="map-tools">
                        <button aria-label="Edit"><svg width="18" height="18"><use href="#i-pencil"/></svg></button>
                        <button aria-label="Fit to assets"><svg width="19" height="19"><use href="#i-expand"/></svg></button>
                    </div>
                    <a class="google" href="#">Google</a>
                    <div class="attribution"><span>Map data ©2019 Google, INEGI, ORION-ME</span><a href="#">Terms of Use</a></div>
                </div>
            </section>

            <section class="card">
                <div class="card-header">
                    <svg width="28" height="25"><use href="#i-chart"/></svg>
                    <h2>Process Overview</h2>
                    <button class="collapse" aria-label="Collapse"><svg width="14" height="8"><use href="#i-caret"/></svg></button>
                </div>
                <table class="processes">
                    <thead>
                        <tr>
                            <th class="c-state">State</th>
                            <th class="c-desc">Description</th>
                            <th class="c-status">Status</th>
                            <th class="c-type">Type</th>
                            <th class="c-asset">Asset</th>
                            <th class="c-start">Start Time</th>
                            <th>Actions</th>
                        </tr>
                    </thead>
                    <tbody>
                        <tr>
                            <td><span class="dot"></span></td>
                            <td>Monitoring for Beq...</td>
                            <td></td>
                            <td>Monitoring</td>
                            <td><a href="#">Bequisa Stack Fumigation</a></td>
                            <td>27/03/2019 18:41</td>
                            <td><button class="go" aria-label="Open"><svg width="14" height="14"><use href="#i-go"/></svg></button></td>
                        </tr>
                        <tr>
                            <td><span class="dot"></span></td>
                            <td>QUALITY CONTRO...</td>
                            <td></td>
                            <td>Quality Control</td>
                            <td><a href="#">Indiana Silo 1</a></td>
                            <td>14/03/2019 12:37</td>
                            <td><button class="go" aria-label="Open"><svg width="14" height="14"><use href="#i-go"/></svg></button></td>
                        </tr>
                        <tr><td colspan="7"></td></tr>
                    </tbody>
                </table>
            </section>
        </main>
    </div>

    <footer class="taskbar"><span></span></footer>

    <button class="chat" aria-label="Open chat">
        <svg width="22" height="25" viewBox="0 0 22 25"><path fill="#fff" d="M2.500 0h17A2.500 2.500 0 0 1 22 2.500V25c-2-1-4-2.500-6-3H2.500A2.500 2.500 0 0 1 0 19.500v-17A2.500 2.500 0 0 1 2.500 0z"/><path fill="none" stroke="#424242" stroke-width="1.400" stroke-linecap="round" d="M4 15.500c4 3.200 10 3.200 14 0"/></svg>
    </button>
    <button class="next" aria-label="Next">
        <svg width="14" height="14" viewBox="0 0 14 14"><circle cx="7" cy="7" r="7" fill="#3a3a3c"/><path fill="none" stroke="#fff" stroke-width="2" d="M5.300 3.200L9 7l-3.700 3.800"/></svg>
    </button>
</body>
</html>
```
FILE: styles.css
```
* {
    box-sizing: border-box;
}
body {
    margin: 0;
    height: 100vh;
    display: flex;
    flex-direction: column;
    overflow: hidden;
    background: #fafafa;
    font-family: Roboto, "Liberation Sans", sans-serif;
    font-size: 12px;
    color: #212121;
}
button {
    padding: 0;
    border: none;
    background: none;
    font-family: inherit;
    color: inherit;
    cursor: pointer;
}
a {
    color: inherit;
    text-decoration: none;
}
svg {
    display: block;
}
.sprite {
    position: absolute;
    width: 0;
    height: 0;
}

/* Top bar */
.topbar {
    display: flex;
    align-items: center;
    justify-content: space-between;
    height: 41px;
    flex: none;
    padding: 0 15px 0 21px;
    background: #3a3a3c;
    color: #c0976d;
    box-shadow: 0 1px 2px rgba(0, 0, 0, 0.5);
    z-index: 2;
}
.logo {
    display: flex;
    align-items: center;
    gap: 9px;
}
.logo-mark path {
    fill: none;
    stroke: #c0976d;
    stroke-width: 3;
}
.logo-text {
    position: relative;
    padding-top: 5px;
    font-size: 22px;
    line-height: 26px;
    font-weight: 500;
}
.logo-text::before {
    content: "";
    position: absolute;
    left: -6px;
    top: 18px;
    width: 19px;
    height: 2px;
    background: #c0976d;
}
.topbar-actions {
    display: flex;
    align-items: center;
    gap: 26px;
}
.topbar-btn {
    position: relative;
}
.badge {
    position: absolute;
    top: -8px;
    left: 5px;
    width: 15px;
    height: 15px;
    border-radius: 50%;
    background: #ff3b3b;
    color: #fff;
    font-size: 10px;
    line-height: 15px;
    font-weight: 700;
}

/* Sidebar */
.container {
    display: flex;
    flex: 1;
    min-height: 0;
}
.sidebar {
    width: 83px;
    flex: none;
    background: #3a3a3c;
}
.sidebar a {
    display: flex;
    flex-direction: column;
    align-items: center;
    justify-content: flex-end;
    height: 68px;
    padding-bottom: 15px;
    color: #c0976d;
    line-height: 14px;
}
.sidebar a.tall {
    height: 75px;
}
.sidebar a.tall svg {
    margin-bottom: 4px;
}
.sidebar a.active {
    background: #fff;
    color: #3a3a3c;
}

/* Content */
.content {
    flex: 1;
    min-width: 0;
    display: flex;
    flex-direction: column;
    gap: 12px;
    padding: 0 6px 0 10px;
    overflow: hidden;
}
.breadcrumb {
    display: flex;
    align-items: center;
    gap: 4px;
    height: 22px;
    flex: none;
    margin: 0 0 -6px -4px;
    color: #2f2f31;
}
.breadcrumb em {
    color: #8c8c8c;
}
.crumb-sep path {
    fill: none;
    stroke: #3a3a3c;
    stroke-width: 1.4;
}
.card {
    flex: none;
    background: #fff;
    box-shadow: 0 1px 2px rgba(0, 0, 0, 0.5);
}
.card-header {
    display: flex;
    align-items: center;
    gap: 19px;
    height: 42px;
    padding: 0 9px 1px 8px;
    border-bottom: 3px solid #c0976d;
    color: #c0976d;
}
.card-header.tall {
    height: 49px;
    gap: 22px;
    padding-left: 9px;
}
.card-header h2 {
    margin: 0;
    font-size: 18px;
    font-weight: 400;
}
.collapse {
    margin-left: auto;
}
.quick-actions {
    display: flex;
    align-items: flex-start;
    justify-content: space-between;
    height: 78px;
    padding: 14px 5px 0 12px;
}
.start-btn {
    display: flex;
    align-items: center;
    gap: 12px;
    height: 51px;
    padding: 0 9px 0 12px;
    border-radius: 2px;
    background: #3a3a3c;
    color: #c0976d;
    font-size: 11px;
    font-weight: 500;
    box-shadow: 0 2px 4px rgba(0, 0, 0, 0.4);
}
.quick-links {
    display: flex;
}
.quick-links a {
    display: flex;
    flex-direction: column;
    align-items: center;
    justify-content: flex-end;
    gap: 4px;
    min-width: 78px;
    height: 42px;
    padding: 0 12px;
    font-size: 11px;
    line-height: 14px;
}
.quick-links svg {
    color: #333335;
}

/* Filters */
.filters {
    display: flex;
    align-items: center;
    height: 44px;
    padding: 0 21px 0 9px;
}
.filters input,
.filters select {
    height: 23px;
    padding: 0 1px;
    border: none;
    border-bottom: 1px solid #e0e0e0;
    border-radius: 0;
    outline: none;
    background: none;
    font-family: inherit;
    font-size: 12px;
    color: #9e9e9e;
}
.filters input {
    width: 52px;
}
.filters ::placeholder {
    color: #a6a6a6;
}
.filters select {
    width: 54px;
    appearance: none;
    background: linear-gradient(to bottom right, #757575 50%, transparent 50%) no-repeat right 7px center / 3px 4px,
                linear-gradient(to bottom left, #757575 50%, transparent 50%) no-repeat right 10px center / 3px 4px;
}
.filters select.product {
    width: 70px;
}
.filters input.search {
    width: 140px;
    margin-left: 14px;
}
.sep {
    width: 1px;
    height: 15px;
    margin: 0 8px;
    background: #dcdcdc;
}
.sep.last {
    margin: 0 21px 0 auto;
}
.states {
    display: flex;
}
.state {
    display: flex;
    align-items: center;
    justify-content: center;
    width: 24px;
    height: 27px;
    border-radius: 50%;
}
.state.selected {
    box-shadow: 0 2px 6px rgba(0, 0, 0, 0.3);
}
.none { color: #c0976d; }
.ok { color: #0a8f08; }
.warn { color: #ff9f0f; }
.crit { color: #ee3322; }
.limit {
    display: flex;
    align-items: center;
    padding-left: 4px;
}
.limit select {
    margin: 0 10px 0 5px;
}
.limit label {
    display: flex;
    align-items: center;
    gap: 1px;
}
.map-view {
    display: flex;
    align-items: center;
    justify-content: flex-end;
    gap: 6px;
    height: 24px;
    padding-right: 7px;
    font-weight: 500;
}
.toggle {
    position: relative;
    appearance: none;
    width: 27px;
    height: 11px;
    margin: 0;
    border-radius: 6px;
    background: #dfcbb6;
}
.toggle:checked::after {
    content: "";
    position: absolute;
    right: 0;
    top: -2px;
    width: 15px;
    height: 15px;
    border-radius: 50%;
    background: #c0976d;
    box-shadow: 0 1px 2px rgba(0, 0, 0, 0.3);
}
.info {
    display: flex;
    align-items: center;
    gap: 10px;
    height: 57px;
    margin: 6px;
    padding: 0 12px 2px;
    border-radius: 2px;
    box-shadow: 0 1px 3px rgba(0, 0, 0, 0.6);
    color: #5f5f5f;
}
.info svg {
    color: #c0976d;
}

/* Map */
.map {
    position: relative;
    height: 375px;
    overflow: hidden;
}
.map-canvas {
    width: 100%;
    height: 100%;
}
.border path {
    fill: none;
    stroke: #8b9289;
    stroke-width: 3;
    opacity: 0.8;
}
.border .state-line {
    stroke: #a9aea0;
    stroke-dasharray: 6 6;
}
.graticule {
    fill: none;
    stroke: #fff;
    opacity: 0.14;
}
.lbl {
    text-anchor: middle;
    font-size: 8px;
    paint-order: stroke;
    stroke: rgba(255, 255, 255, 0.6);
    stroke-width: 2px;
    stroke-linejoin: round;
}
.region {
    fill: #6f7a7c;
    font-weight: 500;
    letter-spacing: 1px;
}
.city {
    fill: #333;
}
.country {
    fill: #222;
    font-size: 11px;
    font-weight: 500;
}
.country.small {
    font-size: 8px;
}
.country.large {
    font-size: 13px;
    font-weight: 700;
    letter-spacing: 1px;
}
.water {
    fill: #4f84c9;
    stroke: none;
}
.water.ocean {
    font-size: 9px;
    letter-spacing: 1px;
}
.dots circle {
    fill: #fff;
    stroke: #333;
}
.cluster {
    text-anchor: middle;
    font-size: 9px;
    font-weight: 700;
}
.map-type,
.map-btn,
.zoom,
.map-tools,
.google,
.attribution {
    position: absolute;
}
.map-type {
    top: 8px;
    left: 8px;
    display: flex;
    border-radius: 2px;
    background: #fff;
    box-shadow: 0 1px 4px rgba(0, 0, 0, 0.3);
}
.map-type button {
    height: 30px;
    padding: 0 16px;
    font-size: 14px;
    color: #565656;
}
.map-type .on {
    padding: 0 17px;
    border-right: 1px solid #e6e6e6;
    font-weight: 500;
    color: #000;
}
.map-btn,
.zoom {
    right: 7px;
    width: 30px;
    border-radius: 2px;
    background: #fff;
    box-shadow: 0 1px 4px rgba(0, 0, 0, 0.3);
}
.fullscreen {
    top: 8px;
    height: 30px;
}
.map-btn svg,
.zoom svg,
.map-tools svg {
    margin: 0 auto;
}
.zoom {
    bottom: 18px;
    display: flex;
    flex-direction: column;
    padding: 0 3px;
}
.zoom button {
    height: 30px;
}
.zoom button + button {
    border-top: 1px solid #e6e6e6;
}
.map-tools {
    left: 6px;
    bottom: 23px;
    display: flex;
    gap: 12px;
}
.map-tools button {
    width: 33px;
    height: 34px;
    border-radius: 2px;
    background: #fafafa;
    color: #c0976d;
    box-shadow: 0 2px 4px rgba(0, 0, 0, 0.4);
}
.google {
    left: 5px;
    bottom: 1px;
    color: #fff;
    font-size: 15px;
    line-height: 18px;
    font-weight: 500;
    text-shadow: 0 0 2px rgba(0, 0, 0, 0.45);
}
.attribution {
    right: 0;
    bottom: 0;
    display: flex;
    gap: 8px;
    padding: 0 4px;
    background: rgba(245, 245, 245, 0.7);
    color: #444;
    font-size: 8px;
    line-height: 11px;
}

/* Process table */
.processes {
    width: 100%;
    table-layout: fixed;
    border-collapse: collapse;
    font-size: 11px;
}
.processes th {
    height: 42px;
    padding: 2px 0 0 18px;
    text-align: left;
    font-size: 9px;
    font-weight: 500;
    color: #757575;
}
.processes td {
    height: 36px;
    padding: 0 0 0 18px;
}
.processes tr {
    border-bottom: 1px solid #e4e4e4;
}
.processes td a {
    color: #c0976d;
    text-decoration: underline;
}
.c-state { width: 6.5%; }
.c-desc { width: 14.1%; }
.c-status { width: 8.5%; }
.c-type { width: 24.4%; }
.c-asset { width: 15.9%; }
.c-start { width: 25.7%; }
.dot {
    display: block;
    width: 12px;
    height: 12px;
    margin: 0 0 2px 5px;
    border-radius: 50%;
    background: #f50000;
}
.go {
    display: block;
    margin: 0 0 2px 6px;
    color: #333335;
}

/* Bottom strip and floating buttons */
.taskbar {
    height: 7px;
    flex: none;
    padding-left: 147px;
    background: linear-gradient(to right, #12181b, #1c2022 12%, #0a0a0a 45%, #080808);
    z-index: 1;
}
.taskbar span {
    display: block;
    width: 46px;
    height: 7px;
    background: #4a4d4f;
}
.chat {
    position: fixed;
    right: 15px;
    bottom: 22px;
    display: flex;
    align-items: center;
    justify-content: center;
    width: 45px;
    height: 45px;
    border-radius: 50%;
    background: #424242;
    box-shadow: 0 1px 12px rgba(0, 0, 0, 0.3);
}
.next {
    position: fixed;
    right: 9px;
    bottom: 13px;
}
```
